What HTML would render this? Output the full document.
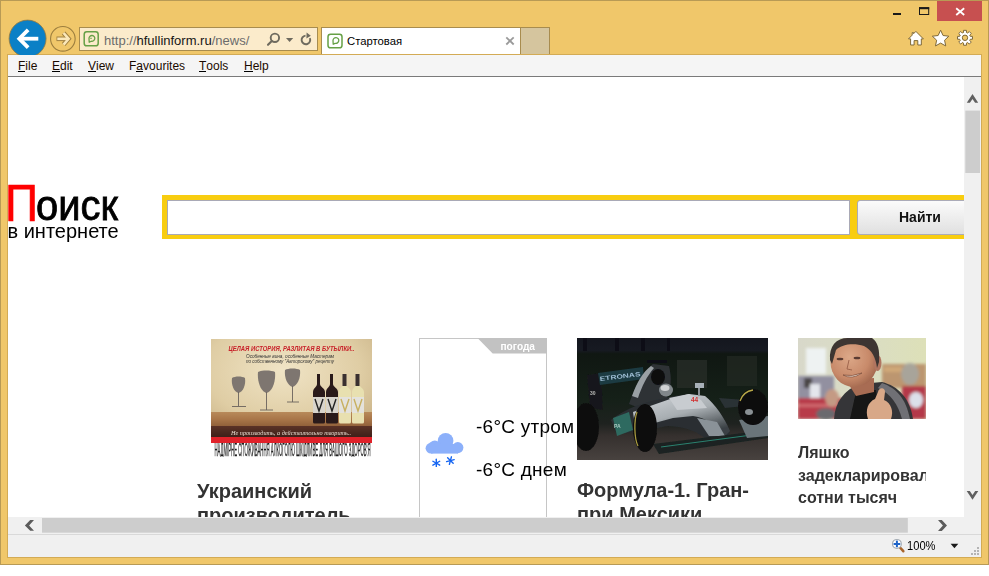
<!DOCTYPE html>
<html><head><meta charset="utf-8">
<style>
*{margin:0;padding:0;box-sizing:border-box}
html,body{width:989px;height:576px;overflow:hidden;background:#fff;font-family:"Liberation Sans",sans-serif}
.abs{position:absolute}
#frame{position:absolute;left:0;top:0;width:989px;height:565px;background:#F0C76A;border:1px solid #B89A55}
#close{left:937px;top:1px;width:45px;height:20px;background:#C75050}
#menubar{left:8px;top:55px;width:973px;height:22px;background:#F5F5F5;border-bottom:1px solid #7A7A7A}
.menu{position:absolute;top:4px;font-size:12px;line-height:14px;color:#1a0a00}
.menu u{text-decoration:none;display:inline-block;position:relative}
.menu u:after{content:"";position:absolute;left:0;right:0;top:12px;height:1px;background:#000}
#content{left:8px;top:77px;width:956px;height:440px;background:#fff;overflow:hidden;will-change:transform}
#vscroll{left:964px;top:77px;width:17px;height:440px;background:#F0F0F0}
#hscroll{left:8px;top:517px;width:973px;height:17px;background:#F0F0F0}
#status{left:8px;top:534px;width:973px;height:23px;background:#F0F0F0;border-top:1px solid #D9D9D9}
#addr{left:79px;top:27px;width:239px;height:24px;background:#FBEBCB;border:1px solid #A88C4E}
#tab{left:321px;top:27px;width:200px;height:27px;background:#fff;border:1px solid #A88C4E;border-bottom:none}
#newtab{left:520px;top:27px;width:30px;height:27px;background:#D5C59E;border:1px solid #A88C4E;border-bottom:none}
#url{left:104px;top:33px;font-size:13px;line-height:15px;color:#6b6b6b;white-space:nowrap}
#url b{font-weight:normal;color:#151515}
#tabtitle{left:347px;top:35px;font-size:11.3px;line-height:13px;color:#000;white-space:nowrap}
svg{position:absolute;left:0;top:0}
.title{font-size:20px;line-height:24px;font-weight:bold;color:#333}
.title4{font-size:16px;line-height:22.5px;font-weight:bold;color:#333;overflow:hidden;white-space:normal}
.temp{font-size:19px;line-height:22px;color:#000;white-space:nowrap;letter-spacing:0.25px}
</style></head><body>
<div id="frame"></div>
<div id="close" class="abs"></div>
<div id="addr" class="abs"></div>
<div id="tab" class="abs"></div>
<div id="newtab" class="abs"></div>
<div id="url" class="abs">http://<b>hfullinform.ru</b>/news/</div>
<div id="tabtitle" class="abs">Стартовая</div>
<div class="abs" style="left:7px;top:54px;width:975px;height:504px;border:1px solid #D3AB55"></div>
<div id="menubar" class="abs">
  <span class="menu" style="left:10px"><u>F</u>ile</span>
  <span class="menu" style="left:44px"><u>E</u>dit</span>
  <span class="menu" style="left:80px"><u>V</u>iew</span>
  <span class="menu" style="left:121px">F<u>a</u>vourites</span>
  <span class="menu" style="left:191px"><u>T</u>ools</span>
  <span class="menu" style="left:236px"><u>H</u>elp</span>
</div>
<div id="content" class="abs">
  <div class="abs" id="logoP" style="left:-3px;top:99.5px;font-size:51px;line-height:54px;color:#FF0000;-webkit-text-stroke:0.7px #FF0000;transform:scaleX(0.9);transform-origin:0 0">П</div>
  <div class="abs" id="logoR" style="left:28px;top:107px;font-size:42px;line-height:44px;color:#000;-webkit-text-stroke:0.8px #000;transform:scaleX(0.95);transform-origin:0 0">оиск</div>
  <div class="abs" id="logoS" style="left:-0.5px;top:142.5px;font-size:20px;line-height:22px;color:#000">в интернете</div>
  <div class="abs" style="left:154px;top:118px;width:820px;height:44px;background:#F8CD10"></div>
  <div class="abs" style="left:159px;top:123px;width:683px;height:35px;background:#fff;border:1px solid #A9A9B6"></div>
  <div class="abs" style="left:849px;top:123px;width:140px;height:35px;background:linear-gradient(#FBFBFB,#E0E0E0);border:1px solid #ABABB8;border-radius:3px"></div>
  <div class="abs" style="left:891px;top:131.5px;font-size:14px;line-height:16px;font-weight:bold;color:#111">Найти</div>
  <!-- card 1 wine -->
  <svg class="abs" style="left:203px;top:262px" width="161" height="118" viewBox="0 0 161 118">
    <defs>
      <radialGradient id="wbg" cx="0.45" cy="0.3" r="0.8">
        <stop offset="0" stop-color="#F0E4C6"/><stop offset="0.6" stop-color="#DFCDA4"/><stop offset="1" stop-color="#C4AC80"/>
      </radialGradient>
      <linearGradient id="wood" x1="0" y1="0" x2="0" y2="1">
        <stop offset="0" stop-color="#B88A5A"/><stop offset="0.5" stop-color="#A87548"/><stop offset="1" stop-color="#8E5E38"/>
      </linearGradient>
      <linearGradient id="dbr" x1="0" y1="0" x2="0" y2="1">
        <stop offset="0" stop-color="#5A3226"/><stop offset="1" stop-color="#3E2019"/>
      </linearGradient>
    </defs>
    <rect width="161" height="104" fill="url(#wbg)"/>
    <rect x="0" y="73" width="161" height="15" fill="url(#wood)"/>
    <rect x="0" y="87" width="161" height="11" fill="url(#dbr)"/>
    <rect x="0" y="98" width="161" height="6" fill="#E0222A"/>
    <rect x="0" y="104" width="161" height="14" fill="#fff"/>
    <text x="17.5" y="11.5" font-family="Liberation Sans" font-size="7.2" font-weight="bold" font-style="italic" fill="#C8222A" textLength="126" lengthAdjust="spacingAndGlyphs">ЦЕЛАЯ ИСТОРИЯ, РАЗЛИТАЯ В БУТЫЛКИ..</text>
    <text x="35" y="18.5" font-family="Liberation Sans" font-size="4.8" font-style="italic" fill="#333" textLength="88" lengthAdjust="spacingAndGlyphs">Особенные вина, особенные Мастерам</text>
    <text x="35" y="24" font-family="Liberation Sans" font-size="4.8" font-style="italic" fill="#333" textLength="88" lengthAdjust="spacingAndGlyphs">по собственному "Авторскому" рецепту</text>
    <g fill="#7E7670">
      <path d="M21,39 C24,37 31,37 34,39 C35,46 32,53 27.5,54 C23,53 20,46 21,39 Z"/>
      <path d="M47,33 C51,31 60,31 64,33 C65,43 61,53 55.5,54 C50,53 46,43 47,33 Z"/>
      <path d="M74,31 C77,29 86,29 89,31 C90,39 86,47 81.5,48 C77,47 73,39 74,31 Z"/>
    </g>
    <g stroke="#6A625C" stroke-width="0.9">
      <line x1="27.5" y1="53" x2="27.5" y2="67"/><line x1="21" y1="67.5" x2="35" y2="67.5"/>
      <line x1="55.5" y1="53" x2="55.5" y2="71"/><line x1="49" y1="71" x2="62" y2="71"/>
      <line x1="81.5" y1="47" x2="81.5" y2="63"/><line x1="76" y1="63" x2="88" y2="63"/>
    </g>
    <g>
      <path d="M106,35 h3 v10 C109,48 114,49 114,53 V83 Q114,84.5 112.5,84.5 H103.5 Q102,84.5 102,83 V53 C102,49 106,48 106,45 Z" fill="#2A1A1A"/>
      <path d="M119,35 h3 v10 C122,48 127,49 127,53 V83 Q127,84.5 125.5,84.5 H116.5 Q115,84.5 115,83 V53 C115,49 119,48 119,45 Z" fill="#2A1A1A"/>
      <path d="M132,35 h3 v10 C135,48 140,49 140,53 V83 Q140,84.5 138.5,84.5 H129.5 Q128,84.5 128,83 V53 C128,49 132,48 132,45 Z" fill="#E8E0B0"/>
      <path d="M145,35 h3 v10 C148,48 153,49 153,53 V83 Q153,84.5 151.5,84.5 H142.5 Q141,84.5 141,83 V53 C141,49 145,48 145,45 Z" fill="#E8E0B0"/>
      <rect x="131.5" y="35" width="4" height="12" fill="#3A3030"/><rect x="144.5" y="35" width="4" height="12" fill="#3A3030"/>
      <rect x="102" y="58" width="12" height="16" fill="#D8D4CC"/><rect x="115" y="58" width="12" height="16" fill="#D8D4CC"/>
      <rect x="128" y="58" width="12" height="16" fill="#E4E2DC"/><rect x="141" y="58" width="12" height="16" fill="#E4E2DC"/>
      <g stroke="#222" stroke-width="1.4" fill="none"><path d="M104,60 L108,72 L112,60"/><path d="M117,60 L121,72 L125,60"/></g>
      <g stroke="#C8B060" stroke-width="1.4" fill="none"><path d="M130,60 L134,72 L138,60"/><path d="M143,60 L147,72 L151,60"/></g>
    </g>
    <text x="20" y="95.5" font-family="Liberation Serif" font-size="7" font-style="italic" fill="#E8DCD0" textLength="120" lengthAdjust="spacingAndGlyphs">Не производить, а действительно творить..</text>
    <text x="3.5" y="117" font-family="Liberation Sans" font-size="17.5" fill="#1E1E1E" stroke="#1E1E1E" stroke-width="0.25" textLength="156" lengthAdjust="spacingAndGlyphs">НАДМІРНЕ СПОЖИВАННЯ АЛКОГОЛЮ ШКІДЛИВЕ ДЛЯ ВАШОГО ЗДОРОВ'Я</text>
  </svg>
  <div class="abs title" style="left:189px;top:402px;width:190px">Украинский производитель</div>

  <!-- card 2 weather -->
  <div class="abs" style="left:411px;top:261px;width:128px;height:200px;border:1px solid #C6C6C6"></div>
  <svg class="abs" style="left:411px;top:261px" width="130" height="120" viewBox="0 0 130 120">
    <polygon points="58.5,0 128,0 128,15.5 73.7,15.5" fill="#C2C2C2"/>
    <text x="81.5" y="11.7" font-family="Liberation Sans" font-size="11" font-weight="bold" fill="#fff" textLength="34.5" lengthAdjust="spacingAndGlyphs">погода</text>
  </svg>
  <svg class="abs" style="left:411px;top:340px" width="50" height="50" viewBox="419 417 50 50">
    <g fill="#8CB0FA">
      <circle cx="445.6" cy="440.8" r="7.8"/>
      <circle cx="434.8" cy="446.5" r="6"/>
      <circle cx="457.8" cy="447.6" r="5.6"/>
      <rect x="431" y="444" width="27" height="9.6"/>
      <circle cx="431" cy="448.2" r="5.4"/>
    </g>
    <g stroke="#1565F2" stroke-width="1.4" stroke-linecap="round">
      <g transform="translate(436.3,463.2)"><line x1="0" y1="-3.9" x2="0" y2="3.9"/><line x1="-3.4" y1="-1.95" x2="3.4" y2="1.95"/><line x1="-3.4" y1="1.95" x2="3.4" y2="-1.95"/></g>
      <g transform="translate(450.4,460.6) rotate(15)"><line x1="0" y1="-3.9" x2="0" y2="3.9"/><line x1="-3.4" y1="-1.95" x2="3.4" y2="1.95"/><line x1="-3.4" y1="1.95" x2="3.4" y2="-1.95"/></g>
    </g>
  </svg>
  <div class="abs temp" style="left:468px;top:339px">-6°C утром</div>
  <div class="abs temp" style="left:468px;top:382px">-6°C днем</div>

  <!-- card 3 F1 -->
  <svg class="abs" style="left:569px;top:261px" width="191" height="122" viewBox="0 0 191 122">
    <defs>
      <linearGradient id="f1bg" x1="0" y1="0" x2="0" y2="1">
        <stop offset="0" stop-color="#14161E"/><stop offset="0.1" stop-color="#171A22"/><stop offset="0.13" stop-color="#101712"/><stop offset="0.5" stop-color="#152018"/><stop offset="0.7" stop-color="#1E221F"/><stop offset="0.8" stop-color="#35302E"/><stop offset="1" stop-color="#48423F"/>
      </linearGradient>
      <linearGradient id="nose" x1="0" y1="0" x2="0.6" y2="1">
        <stop offset="0" stop-color="#D4D8DC"/><stop offset="0.55" stop-color="#A8AEB2"/><stop offset="1" stop-color="#3A4044"/>
      </linearGradient>
      <filter id="f1b"><feGaussianBlur stdDeviation="0.45"/></filter>
    </defs>
    <rect width="191" height="122" fill="url(#f1bg)"/>
    <g filter="url(#f1b)">
    <g fill="#0C0D12"><rect x="6" y="0" width="4" height="13"/><rect x="38" y="0" width="4" height="13"/><rect x="64" y="0" width="4" height="13"/><rect x="90" y="0" width="3" height="13"/></g>
    <rect x="100" y="22" width="30" height="28" fill="#26302A" opacity="0.7"/>
    <rect x="150" y="18" width="30" height="30" fill="#222A24" opacity="0.7"/>
    <!-- rear wing -->
    <polygon points="10,37 24,35 26,72 13,70" fill="#18191B"/>
    <text x="13" y="57" font-family="Liberation Sans" font-size="5" font-weight="bold" fill="#B8B8B8">30</text>
    <polygon points="21,35 66,29 67,41 23,47" fill="#1C3A42"/>
    <text x="23" y="43" font-family="Liberation Sans" font-size="6.2" font-weight="bold" fill="#9CBCD2" transform="rotate(-7 23 43)" textLength="41" lengthAdjust="spacingAndGlyphs">ETRONAS</text>
    <!-- airbox -->
    <path d="M52,66 C58,48 66,33 76,26 L92,28 C95,40 94,52 90,60 L68,72 Z" fill="#2E3236"/>
    <path d="M55,58 C60,44 66,34 74,28 L77,30 C70,38 65,48 61,60 Z" fill="#9AA0A4"/>
    <ellipse cx="81" cy="39" rx="7" ry="8" fill="#0E0E10"/>
    <rect x="70" y="22" width="20" height="3" fill="#101012"/>
    <!-- helmet -->
    <ellipse cx="89" cy="52" rx="7" ry="6.5" fill="#80868A"/>
    <ellipse cx="88" cy="50" rx="4.5" ry="3" fill="#D0D2D4"/>
    <!-- body -->
    <path d="M34,82 C44,74 60,66 78,62 L98,58 L112,56 L128,58 C138,66 148,80 153,94 L150,100 L128,100 C118,92 104,88 90,88 L60,94 L40,96 Z" fill="#2A2F33"/>
    <path d="M56,74 L96,60 L112,56 L128,58 C138,66 147,79 153,93 L147,99 C140,88 130,80 116,78 L96,80 L74,86 L58,88 Z" fill="url(#nose)"/>
    <path d="M92,60 L112,56 L124,62 L130,70 L100,72 Z" fill="#C8CCD0"/>
    <path d="M120,80 L140,84 L148,98 L132,98 Z" fill="#8A9298"/>
    <text x="114" y="64" font-family="Liberation Sans" font-size="6.5" font-weight="bold" fill="#D23030">44</text>
    <rect x="118" y="45" width="9" height="5" fill="#A8B0B8"/>
    <rect x="121" y="50" width="2" height="8" fill="#8A9096"/>
    <polygon points="142,60 168,62 168,68 148,70" fill="#2A3034"/>
    <!-- sidepod teal -->
    <path d="M36,80 L52,74 L56,92 L40,98 Z" fill="#2E6A60"/>
    <text x="37" y="90" font-family="Liberation Sans" font-size="5" font-weight="bold" fill="#A8C8C0">PA</text>
    <!-- front wing -->
    <polygon points="76,106 191,92 191,100 82,116" fill="#1A2220"/>
    <line x1="84" y1="109" x2="190" y2="95" stroke="#2C8070" stroke-width="1.2"/>
    <polygon points="162,82 191,78 191,98 170,100" fill="#6A747A"/>
    <!-- wheels -->
    <ellipse cx="9" cy="89" rx="13" ry="24" fill="#0C0C0C"/>
    <ellipse cx="68" cy="90" rx="12" ry="24" fill="#0A0A0A"/>
    <path d="M60,74 C57,82 57,100 61,108" fill="none" stroke="#A89A40" stroke-width="1.3"/>
    <ellipse cx="176" cy="69" rx="15" ry="18" fill="#0D0D0D"/>
    <path d="M163,63 C165,57 170,53 176,52" fill="none" stroke="#B8A848" stroke-width="1.3"/>
    <ellipse cx="172" cy="74" rx="4" ry="3" fill="#8A9094"/>
    </g>
  </svg>
  <div class="abs title" style="left:569px;top:401px;width:190px">Формула-1. Гран-при Мексики</div>

  <!-- card 4 Lyashko -->
  <svg class="abs" style="left:790px;top:261px" width="128" height="81" viewBox="0 0 128 81">
    <defs>
      <linearGradient id="lbg" x1="0" y1="0" x2="1" y2="0">
        <stop offset="0" stop-color="#D8D8CA"/><stop offset="0.5" stop-color="#DADDC4"/><stop offset="1" stop-color="#DDE0B8"/>
      </linearGradient>
      <radialGradient id="face" cx="0.4" cy="0.4" r="0.7">
        <stop offset="0" stop-color="#DCA888"/><stop offset="0.6" stop-color="#C88A6A"/><stop offset="1" stop-color="#9A6048"/>
      </radialGradient>
      <filter id="bl" x="-10%" y="-10%" width="120%" height="120%"><feGaussianBlur stdDeviation="1.8"/></filter>
      <filter id="bl2"><feGaussianBlur stdDeviation="0.6"/></filter>
    </defs>
    <rect width="128" height="81" fill="url(#lbg)"/>
    <g filter="url(#bl)">
      <rect x="8" y="10" width="20" height="26" fill="#EEF2F2"/>
      <rect x="84" y="26" width="44" height="24" fill="#BC9670"/>
      <rect x="86" y="29" width="18" height="5" fill="#D0A878"/>
      <ellipse cx="112" cy="36" rx="9" ry="11" fill="#A8A49A"/>
      <rect x="0" y="38" width="36" height="24" fill="#9290A0"/>
      <rect x="6" y="40" width="8" height="10" fill="#4A4444"/>
      <rect x="12" y="46" width="10" height="16" fill="#E4E6EC"/>
      <rect x="0" y="60" width="44" height="21" fill="#B83A4A"/>
      <rect x="0" y="66" width="44" height="3" fill="#D06A70"/>
      <rect x="104" y="48" width="24" height="33" fill="#B43848"/>
      <ellipse cx="34" cy="60" rx="7" ry="9" fill="#C49A84"/>
      <ellipse cx="118" cy="62" rx="7" ry="8" fill="#DCE0EA"/>
      <ellipse cx="28" cy="76" rx="10" ry="6" fill="#6A6A6E"/>
    </g>
    <g filter="url(#bl2)">
      <path d="M36,81 C37,64 46,52 62,46 L84,44 C100,48 112,60 115,81 Z" fill="#363638"/>
      <path d="M84,45 C98,50 108,60 112,81 L104,81 C100,66 93,56 80,50 Z" fill="#707074"/>
      <path d="M52,81 L58,54 L78,52 L82,81 Z" fill="#151515"/>
      <path d="M48,42 L76,40 L76,54 L58,58 Z" fill="#A86C52"/>
      <ellipse cx="56" cy="24" rx="23.5" ry="25" fill="url(#face)"/>
      <ellipse cx="79.5" cy="25" rx="4" ry="8" fill="#B07460"/>
      <path d="M32,22 C31,8 38,0 50,0 L74,0 C80,4 82,12 81,24 L79,30 C78,20 74,12 66,8 C56,5 44,6 38,12 L34,26 Z" fill="#3E3630"/>
      <path d="M45,37 Q54,42 64,35 Q54,39 45,37 Z" fill="#F0E6DC" stroke="#7A4A3A" stroke-width="0.7"/>
      <ellipse cx="42" cy="21" rx="3.4" ry="1.3" fill="#5A3A30"/>
      <ellipse cx="59" cy="20" rx="3.4" ry="1.3" fill="#5A3A30"/>
      <path d="M51,22 L49,31 L54,32" fill="none" stroke="#9A6048" stroke-width="0.9"/>
      <path d="M70,81 C67,72 70,64 77,61 L80,54 C81,49 87,49 87,54 L86,62 C93,65 96,73 93,81 Z" fill="#D8A888"/>
    </g>
  </svg>
  <div class="abs title4" style="left:790px;top:365px;width:128px">Ляшко задекларировал сотни тысяч</div>
</div>
<div id="vscroll" class="abs"></div>
<div id="hscroll" class="abs"></div>
<div id="status" class="abs"></div>

<svg width="989" height="576" viewBox="0 0 989 576">
  <!-- back button -->
  <circle cx="27.6" cy="38.6" r="18.5" fill="#0A80C6" stroke="#9A7A3A" stroke-width="0.8"/>
  <rect x="8" y="55" width="40" height="3" fill="#F5F5F5"/>
  <polyline points="26.8,31.2 19.3,38.7 26.8,46.2" fill="none" stroke="#fff" stroke-width="3.8" stroke-linecap="square" stroke-linejoin="miter"/>
  <line x1="20" y1="38.7" x2="38.3" y2="38.7" stroke="#fff" stroke-width="3.8"/>
  <!-- forward button -->
  <circle cx="62.85" cy="38.85" r="12.3" fill="none" stroke="#9C7E3E" stroke-width="1.1"/>
  <g stroke="#A08040" stroke-width="4.6" fill="none" stroke-linejoin="miter">
    <polyline points="63.6,33 68.6,38.8 63.6,44.6"/>
    <line x1="56.5" y1="38.8" x2="68" y2="38.8"/>
  </g>
  <g stroke="#FBE8BA" stroke-width="2.6" fill="none" stroke-linejoin="miter">
    <polyline points="63.6,33 68.6,38.8 63.6,44.6"/>
    <line x1="57.3" y1="38.8" x2="68" y2="38.8"/>
  </g>
  <!-- favicon in address -->
  <path d="M86.8,31.8 H95.6 Q98.2,31.8 98.2,34.4 V43.2 Q98.2,45.8 95.6,45.8 H86.8 Q84.2,45.8 84.2,43.2 V34.4 Q84.2,31.8 86.8,31.8 Z" fill="none" stroke="#66A046" stroke-width="1.5"/>
  <path d="M89.2,42.3 L89,38.3 A2.9,2.9 0 1 1 91.2,41.2 Z" fill="none" stroke="#66A046" stroke-width="1.3" stroke-linejoin="round"/>
  <line x1="90.2" y1="38.3" x2="91.8" y2="38.3" stroke="#66A046" stroke-width="1"/>
  <!-- search / dropdown / refresh -->
  <circle cx="274.9" cy="37.8" r="4.2" fill="none" stroke="#6E6A5E" stroke-width="1.9"/>
  <line x1="271.8" y1="41" x2="268" y2="44.8" stroke="#6E6A5E" stroke-width="2.1" stroke-linecap="round"/>
  <polygon points="286,37.9 293.2,37.9 289.6,41.9" fill="#6E6A5E"/>
  <path d="M305.53,35.62 A4.3,4.3 0 1 0 309.80,38.08" fill="none" stroke="#6E6A5E" stroke-width="1.9"/>
  <polygon points="306.6,32.6 310.8,35.7 306.4,38.6" fill="#6E6A5E"/>
  <!-- tab favicon -->
  <path d="M330.6,34.2 H339.4 Q342,34.2 342,36.8 V45.2 Q342,47.8 339.4,47.8 H330.6 Q328,47.8 328,45.2 V36.8 Q328,34.2 330.6,34.2 Z" fill="none" stroke="#66A046" stroke-width="1.5"/>
  <path d="M333.2,44.2 L333,40.5 A2.9,2.9 0 1 1 335.2,43.3 Z" fill="none" stroke="#66A046" stroke-width="1.3" stroke-linejoin="round"/>
  <!-- tab close -->
  <g stroke="#9A9A9A" stroke-width="1.8"><line x1="506.3" y1="37.3" x2="513.7" y2="44.5"/><line x1="513.7" y1="37.3" x2="506.3" y2="44.5"/></g>
  <!-- title buttons -->
  <rect x="893" y="13" width="8" height="2" fill="#1a1a1a"/>
  <rect x="919.5" y="7.8" width="9.2" height="6.7" fill="none" stroke="#1a1a1a" stroke-width="1"/>
  <rect x="919" y="7.2" width="10.2" height="2" fill="#1a1a1a"/>
  <g stroke="#fff" stroke-width="1.8"><line x1="956.2" y1="8.3" x2="964.2" y2="15"/><line x1="964.2" y1="8.3" x2="956.2" y2="15"/></g>
  <!-- home -->
  <path d="M915.9,31.4 L923.4,38.9 L921.3,38.9 L921.3,45 L917.8,45 L917.8,40.6 L914.1,40.6 L914.1,45 L910.6,45 L910.6,38.9 L908.5,38.9 L912.2,35.1 L912.2,32.6 L913.6,32.6 L913.6,33.7 Z" fill="#fff" stroke="#7E6838" stroke-width="1" stroke-linejoin="round"/>
  <!-- star -->
  <path d="M940.60,30.20 L943.07,35.50 L948.87,36.21 L944.59,40.20 L945.71,45.94 L940.60,43.10 L935.49,45.94 L936.61,40.20 L932.33,36.21 L938.13,35.50 Z" fill="#fff" stroke="#7E6838" stroke-width="1" stroke-linejoin="round"/>
  <!-- gear -->
  <g transform="translate(965,37.8)">
    <path id="gearp" d="M-1.45,-5.31 L-1.45,-7.46 L1.45,-7.46 L1.45,-5.31 L2.73,-4.78 L4.25,-6.30 L6.30,-4.25 L4.78,-2.73 L5.31,-1.45 L7.46,-1.45 L7.46,1.45 L5.31,1.45 L4.78,2.73 L6.30,4.25 L4.25,6.30 L2.73,4.78 L1.45,5.31 L1.45,7.46 L-1.45,7.46 L-1.45,5.31 L-2.73,4.78 L-4.25,6.30 L-6.30,4.25 L-4.78,2.73 L-5.31,1.45 L-7.46,1.45 L-7.46,-1.45 L-5.31,-1.45 L-4.78,-2.73 L-6.30,-4.25 L-4.25,-6.30 L-2.73,-4.78 Z" fill="#fff" stroke="#7E6838" stroke-width="1"/>
    <circle r="2.7" fill="#F0C76A" stroke="#7E6838" stroke-width="1"/>
  </g>
</svg>


<svg width="989" height="576" viewBox="0 0 989 576" style="pointer-events:none">
  <!-- vscroll -->
  <rect x="965.3" y="110.6" width="14.7" height="62.4" fill="#CDCDCD"/>
  <polygon points="966.8,102.8 969.9,102.8 972.5,98.9 975.1,102.8 978.2,102.8 972.5,93.9" fill="#606060"/>
  <polygon points="966.7,491 969.8,491 972.5,495.1 975.2,491 978.3,491 972.5,499.8" fill="#606060"/>
  <!-- hscroll -->
  <rect x="42" y="518" width="865.8" height="14.7" fill="#CDCDCD"/>
  <polygon points="30.2,519.9 34,519.9 29.1,525.5 34,530.8 30.2,530.8 24.9,525.5" fill="#5C5C5C"/>
  <polygon points="938,520 941.8,520 947,525.5 941.8,531 938,531 942.9,525.5" fill="#5C5C5C"/>
  <!-- status zoom -->
  <line x1="900" y1="547.5" x2="903.3" y2="551.2" stroke="#A8652C" stroke-width="2.6" stroke-linecap="round"/>
  <circle cx="896.9" cy="543.9" r="4.4" fill="#fff" stroke="#A4ACB4" stroke-width="1.2"/>
  <rect x="893.6" y="543" width="6.6" height="2" fill="#1E64C8"/>
  <rect x="895.9" y="540.6" width="2" height="6.6" fill="#1E64C8"/>
  <polygon points="950.6,543.8 958.3,543.8 954.45,548.2" fill="#1A1A1A"/>
  <g fill="#B4B4B4">
    <rect x="977" y="547" width="2" height="2"/>
    <rect x="974" y="550" width="2" height="2"/><rect x="977" y="550" width="2" height="2"/>
    <rect x="971" y="553" width="2" height="2"/><rect x="974" y="553" width="2" height="2"/><rect x="977" y="553" width="2" height="2"/>
  </g>
</svg>
<div class="abs" style="left:907px;top:540px;font-size:12px;line-height:12px;color:#000;transform:scaleX(0.93);transform-origin:0 0">100%</div>
</body></html>
